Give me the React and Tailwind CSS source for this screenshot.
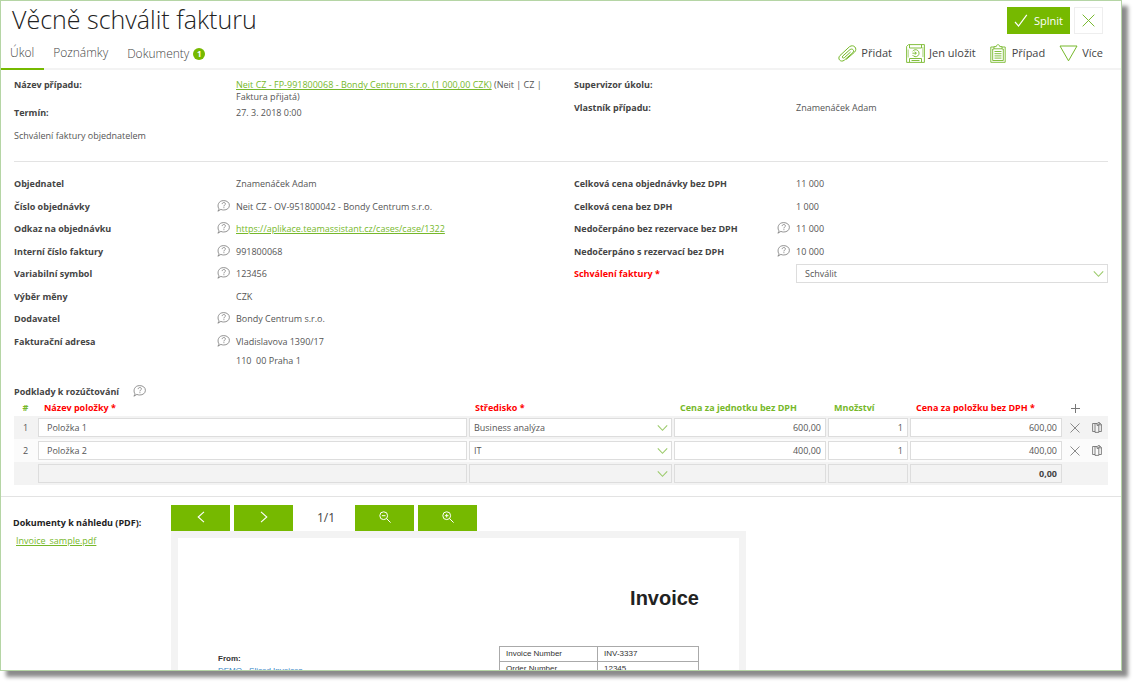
import React from "react";

function HelpIcon() {
  return (
    <svg className="mt-px" width="13" height="12" viewBox="0 0 13 12" fill="none" stroke="#777" strokeWidth="0.8" aria-hidden="true">
      <path d="M1.600 8.200C.2 5.600 1.300 .6 6.700 .6c3.300 0 5.700 2 5.700 4.700 0 2.900-2.500 4.700-5.700 4.700-1.100 0-2-.2-2.800-.6L.9 11.200 2.200 9z" strokeLinejoin="round" />
      <path d="M5.200 4.100c0-1 .7-1.600 1.600-1.600s1.600.6 1.600 1.400c0 1.200-1.500 1.200-1.500 2.500M6.900 7.200v1" />
    </svg>
  );
}

function Chevron() {
  return (
    <svg className="pointer-events-none absolute top-1/2 right-1 -translate-y-1/2" width="11" height="7" viewBox="0 0 11 7" fill="none" stroke="#9ccb6b" strokeWidth="1.100" aria-hidden="true">
      <path d="M.8.8l4.700 5 4.700-5" />
    </svg>
  );
}

function ClipIcon() {
  return (
    <svg width="19" height="17" viewBox="0 0 19 17" fill="none" stroke="#76b82a" strokeWidth="1" strokeLinecap="round" aria-hidden="true">
      <path d="M8.500 14.200l8.100-7.100c3.300-3.600-.9-8.300-5.100-5.400L2 10.500c-3.100 3.300.8 7.400 4.300 4.700l8.500-7.500c2.100-2.300-.5-4.700-2.800-3.100l-7.300 6.500c-1.100 1.300.3 2.500 1.600 1.600l6-5.400" />
    </svg>
  );
}

function SaveIcon() {
  return (
    <svg width="19" height="19" viewBox="0 0 19 19" fill="none" stroke="#76b82a" strokeWidth="0.9" aria-hidden="true">
      <path d="M2.500.6h15.900v17.800H.6V2.500z" />
      <path d="M3.500.8v3.200h12V.8M3.500 18.200v-3.700h12v3.700M5.500 16.500h8" />
      <path d="M6.600 7.300a3.500 3.500 0 1 1 0 3.800M6.400 9.200h3.800M8.700 7.700l1.700 1.500-1.700 1.500" />
      <path d="M2.200 5.500v8M16.900 3v10" strokeWidth="0.6" />
    </svg>
  );
}

function CaseIcon() {
  return (
    <svg width="16" height="19" viewBox="0 0 16 19" fill="none" stroke="#76b82a" strokeWidth="0.9" aria-hidden="true">
      <path d="M4 3H.8v15.300h14.400V3H12" />
      <path d="M4 4.800V2.600h2.200C6.300.1 9.700.1 9.800 2.600H12v2.200z" />
      <path d="M4 5H2.700v11.500h10.600V5H12M4.500 7.500h7M4.500 9.700h7M4.500 11.900h7M4.500 14.100h7" />
    </svg>
  );
}

function MoreIcon() {
  return (
    <svg width="19" height="17" viewBox="0 0 19 17" fill="none" stroke="#76b82a" strokeWidth="1" aria-hidden="true">
      <path d="M1 1h17L9.500 15.800z" />
    </svg>
  );
}

function CrossIcon({ size, color }) {
  return (
    <svg width={size} height={size} viewBox="0 0 12 12" fill="none" stroke={color} strokeWidth="0.9" aria-hidden="true">
      <path d="M.6.6l10.800 10.800M11.400.6L.6 11.400" />
    </svg>
  );
}

function CopyIcon() {
  return (
    <svg width="10" height="11" viewBox="0 0 10 11" fill="none" stroke="#666" strokeWidth="0.8" aria-hidden="true">
      <path d="M3 1.500H.6v8H3" />
      <path d="M3 1.500h2.300l1.500 1.600v7.300H3zM5 1.600v1.800h1.700M5.800.6h1.700l1.900 1.900v7H7M7.300.8v2h2" />
    </svg>
  );
}

function ZoomGlyph({ plus }) {
  return (
    <svg width="12" height="12" viewBox="0 0 12 12" fill="none" stroke="#fff" strokeWidth="1" aria-hidden="true">
      <circle cx="4.700" cy="4.700" r="3.900" />
      <path d="M7.600 7.600l4 4M2.900 4.700h3.600" />
      {plus && <path d="M4.700 2.900v3.600" />}
    </svg>
  );
}

function ArrowGlyph({ d }) {
  return (
    <svg width="8" height="12" viewBox="0 0 8 12" fill="none" stroke="#fff" strokeWidth="1.100" aria-hidden="true">
      <path d={d} />
    </svg>
  );
}

function Row({ label, help, children }) {
  return (
    <div className="flex items-start">
      <dt className="flex w-[222px] shrink-0 justify-between pr-1.5 font-bold text-[#444]">
        {label}
        {help && <HelpIcon />}
      </dt>
      <dd className="min-w-0 flex-1">{children}</dd>
    </div>
  );
}

function SummaryRow({ label, children }) {
  return (
    <div className="flex min-h-[23px] pt-1 leading-3">
      <dt className="w-[222px] shrink-0 font-bold text-[#444]">{label}</dt>
      <dd className="min-w-0 flex-1">{children}</dd>
    </div>
  );
}

const linkClass = "text-[#76b82a] underline";

const actions = [
  { label: "Přidat", icon: <ClipIcon />, gap: "gap-1" },
  { label: "Jen uložit", icon: <SaveIcon />, gap: "gap-1" },
  { label: "Případ", icon: <CaseIcon />, gap: "gap-1.5" },
  { label: "Více", icon: <MoreIcon />, gap: "gap-1" },
];

const items = [
  { id: "1", name: "Položka 1", center: "Business analýza", unit: "600,00", count: "1", total: "600,00" },
  { id: "2", name: "Položka 2", center: "IT", unit: "400,00", count: "1", total: "400,00" },
  { id: "", name: "", center: "", unit: "", count: "", total: "0,00", footer: true },
];

function CellInput({ label, value, footer, className }) {
  return (
    <input
      aria-label={label}
      defaultValue={value}
      readOnly={footer}
      className={`block h-[19px] w-full border border-[#ddd] ${footer ? "bg-[#f3f3f3] font-bold text-[#444]" : "bg-white"} ${className}`}
    />
  );
}

function ItemsTable() {
  return (
    <table className="w-full table-fixed border-collapse">
      <colgroup>
        <col className="w-[23px]" />
        <col />
        <col className="w-[205px]" />
        <col className="w-[154px]" />
        <col className="w-[82px]" />
        <col className="w-[154px]" />
        <col className="w-[45px]" />
      </colgroup>
      <thead>
        <tr className="h-4 text-left leading-4 text-[#76b82a]">
          <th className="text-center">#</th>
          <th className="pl-[7px] text-[#f00]">Název položky *</th>
          <th className="pl-[7px] text-[#f00]">Středisko *</th>
          <th className="pl-[7px]">Cena za jednotku bez DPH</th>
          <th className="pl-[7px]">Množství</th>
          <th className="pl-[7px] text-[#f00]">Cena za položku bez DPH *</th>
          <th>
            <button type="button" aria-label="Přidat řádek" className="ml-2 block">
              <svg width="9" height="9" viewBox="0 0 9 9" stroke="#777" strokeWidth="1" aria-hidden="true">
                <path d="M4.500 0v9M0 4.500h9" />
              </svg>
            </button>
          </th>
        </tr>
      </thead>
      <tbody>
        {items.map((it, i) => (
          <tr key={i} className={i === 1 ? "bg-[#fbfbfb]" : "bg-[#f3f3f3]"}>
            <td className="text-center">{it.id}</td>
            <td className="px-px py-0.5">
              <CellInput label="Název položky" value={it.name} footer={it.footer} className="px-2" />
            </td>
            <td className="px-px py-0.5">
              <div className="relative">
                <select
                  aria-label="Středisko"
                  defaultValue={it.center}
                  className={`block h-[19px] w-full appearance-none border border-[#ddd] px-1 ${it.footer ? "bg-[#f3f3f3]" : "bg-white"}`}
                >
                  <option>{it.center}</option>
                </select>
                <Chevron />
              </div>
            </td>
            <td className="px-px py-0.5">
              <CellInput label="Cena za jednotku bez DPH" value={it.unit} footer={it.footer} className="px-1 text-right" />
            </td>
            <td className="px-px py-0.5">
              <CellInput label="Množství" value={it.count} footer={it.footer} className="px-1 text-right" />
            </td>
            <td className="px-px py-0.5">
              <CellInput label="Cena za položku bez DPH" value={it.total} footer={it.footer} className="px-1 text-right" />
            </td>
            <td>
              {!it.footer && (
                <div className="flex items-center justify-between pr-1.5 pl-[7px]">
                  <button type="button" aria-label="Smazat řádek">
                    <CrossIcon size={10} color="#666" />
                  </button>
                  <button type="button" aria-label="Kopírovat řádek">
                    <CopyIcon />
                  </button>
                </div>
              )}
            </td>
          </tr>
        ))}
      </tbody>
    </table>
  );
}

function ToolButton({ label, children }) {
  return (
    <button type="button" aria-label={label} className="flex h-[26px] w-[59px] items-center justify-center bg-[#76b900] pb-0.5">
      {children}
    </button>
  );
}

export default function App() {
  return (
    <div className="h-screen overflow-hidden bg-white pr-[11px] pb-3 font-['Open_Sans',sans-serif] text-[9px] leading-4 text-[#555]">
      <div className="flex h-full flex-col overflow-hidden border border-[#b5d5a5] bg-white shadow-[6px_6px_4px_#8c8c8c]">
        <header className="flex shrink-0 justify-between border-b-2 border-[#f3f3f3]">
          <div>
            <h1 className="pl-[11px] text-[25px] leading-[37px] font-light text-[#222]">Věcně schválit fakturu</h1>
            <nav className="-mb-0.5 flex text-[12px] leading-[30px] font-light text-[#444]">
              <a href="#ukol" className="border-b-2 border-[#76b900] pr-2.5 pl-[9px]">Úkol</a>
              <a href="#poznamky" className="pr-2.5 pl-[9px]">Poznámky</a>
              <a href="#dokumenty" className="flex items-center gap-1 pr-2.5 pl-[9px]">
                Dokumenty
                <span className="flex size-3 items-center justify-center rounded-full bg-[#76b900] text-[8px] leading-3 font-bold text-white">1</span>
              </a>
            </nav>
          </div>
          <div className="flex flex-col items-end gap-[9px] pt-1.5 pr-[18px]">
            <div className="flex gap-1">
              <button type="button" className="flex h-[27px] items-center gap-1.5 bg-[#76b900] px-[7px] text-[11px] text-white">
                <svg width="14" height="13" viewBox="0 0 14 13" fill="none" stroke="#fff" strokeWidth="1.200" aria-hidden="true">
                  <path d="M1 8l3.500 4L12.800.8" />
                </svg>
                Splnit
              </button>
              <button type="button" aria-label="Zavřít" className="flex h-[27px] w-[29px] items-center justify-center border border-[#eee]">
                <CrossIcon size={13} color="#76b82a" />
              </button>
            </div>
            <div className="flex gap-[14px] text-[11px] leading-5 text-[#444]">
              {actions.map((a) => (
                <button key={a.label} type="button" className={`flex items-center ${a.gap}`}>
                  {a.icon}
                  {a.label}
                </button>
              ))}
            </div>
          </div>
        </header>

        <main className="flex min-h-0 flex-1 flex-col">
          <div className="shrink-0 px-[13px]">
            <section className="grid grid-cols-2 gap-x-[26px] border-b border-[#e3e3e3] pt-[5px] pb-[15px]">
              <dl>
                <SummaryRow label="Název případu:">
                  <a href="#pripad" className={linkClass}>Neit CZ - FP-991800068 - Bondy Centrum s.r.o. (1 000,00 CZK)</a> (Neit | CZ | Faktura přijatá)
                </SummaryRow>
                <SummaryRow label="Termín:">27. 3. 2018 0:00</SummaryRow>
              </dl>
              <dl>
                <SummaryRow label="Supervizor úkolu:" />
                <SummaryRow label="Vlastník případu:">Znamenáček Adam</SummaryRow>
              </dl>
              <p className="pt-1 pb-1 leading-3">Schválení faktury objednatelem</p>
            </section>

            <section className="grid grid-cols-2 gap-x-[26px] pt-3.5">
              <dl className="grid h-[199px] grid-rows-[repeat(7,1fr)_auto]">
                <Row label="Objednatel">Znamenáček Adam</Row>
                <Row label="Číslo objednávky" help>Neit CZ - OV-951800042 - Bondy Centrum s.r.o.</Row>
                <Row label="Odkaz na objednávku" help>
                  <a href="https://aplikace.teamassistant.cz/cases/case/1322" className={linkClass}>https://aplikace.teamassistant.cz/cases/case/1322</a>
                </Row>
                <Row label="Interní číslo faktury" help>991800068</Row>
                <Row label="Variabilní symbol" help>123456</Row>
                <Row label="Výběr měny">CZK</Row>
                <Row label="Dodavatel" help>Bondy Centrum s.r.o.</Row>
                <Row label="Fakturační adresa" help>
                  <p>Vladislavova 1390/17</p>
                  <p className="pt-[3px] pb-1.5 whitespace-pre">110  00 Praha 1</p>
                </Row>
              </dl>
              <dl className="grid h-[199px] grid-rows-[repeat(4,1fr)_109px]">
                <Row label="Celková cena objednávky bez DPH">11 000</Row>
                <Row label="Celková cena bez DPH">1 000</Row>
                <Row label="Nedočerpáno bez rezervace bez DPH" help>11 000</Row>
                <Row label="Nedočerpáno s rezervací bez DPH" help>10 000</Row>
                <Row label={<label htmlFor="approval" className="text-[#f00]">Schválení faktury *</label>}>
                  <div className="relative -mt-0.5">
                    <select id="approval" className="block h-[19px] w-full appearance-none border border-[#ddd] bg-white px-2">
                      <option>Schválit</option>
                    </select>
                    <Chevron />
                  </div>
                </Row>
              </dl>
            </section>

            <section className="pt-[9px] pb-[11px]">
              <h2 className="flex gap-3.5 font-bold text-[#444]">
                Podklady k rozúčtování
                <HelpIcon />
              </h2>
              <ItemsTable />
            </section>
          </div>

          <section className="flex min-h-0 flex-1 overflow-hidden border-t border-[#e3e3e3] pt-2">
            <div className="w-[170px] shrink-0 pt-2.5 pl-3">
              <h2 className="font-bold text-[#222]">Dokumenty k náhledu (PDF):</h2>
              <a href="#invoice" className={`mt-0.5 ml-[3px] block ${linkClass}`}>Invoice_sample.pdf</a>
            </div>
            <div className="w-[575px]">
              <div className="flex gap-1">
                <ToolButton label="Předchozí strana"><ArrowGlyph d="M7 .8L1.200 6 7 11.200" /></ToolButton>
                <ToolButton label="Další strana"><ArrowGlyph d="M1 .8L6.800 6 1 11.200" /></ToolButton>
                <span className="w-[54px] pl-1 text-center text-[12px] leading-[26px] text-[#444]">1/1</span>
                <ToolButton label="Oddálit"><ZoomGlyph /></ToolButton>
                <ToolButton label="Přiblížit"><ZoomGlyph plus /></ToolButton>
              </div>
              <div className="border-[7px] border-[#f3f3f3] bg-white px-10 pt-12 pb-40 font-['Liberation_Sans',Arial,sans-serif] text-[#333]">
                <h3 className="text-right text-[20px] leading-6 font-bold text-[#222]">Invoice</h3>
                <div className="flex items-start justify-between pt-9 text-[8px] leading-[14px]">
                  <div className="pt-[7px] leading-3">
                    <p className="font-bold">From:</p>
                    <a href="#demo" className="text-[#3a87c8]">DEMO - Sliced Invoices</a>
                  </div>
                  <table className="w-[200px] table-fixed border-collapse">
                    <tbody>
                      <tr>
                        <td className="w-[98px] border border-[#aaa] px-1.5">Invoice Number</td>
                        <td className="border border-[#aaa] px-1.5">INV-3337</td>
                      </tr>
                      <tr>
                        <td className="border border-[#aaa] px-1.5">Order Number</td>
                        <td className="border border-[#aaa] px-1.5">12345</td>
                      </tr>
                    </tbody>
                  </table>
                </div>
              </div>
            </div>
          </section>
        </main>
      </div>
    </div>
  );
}
